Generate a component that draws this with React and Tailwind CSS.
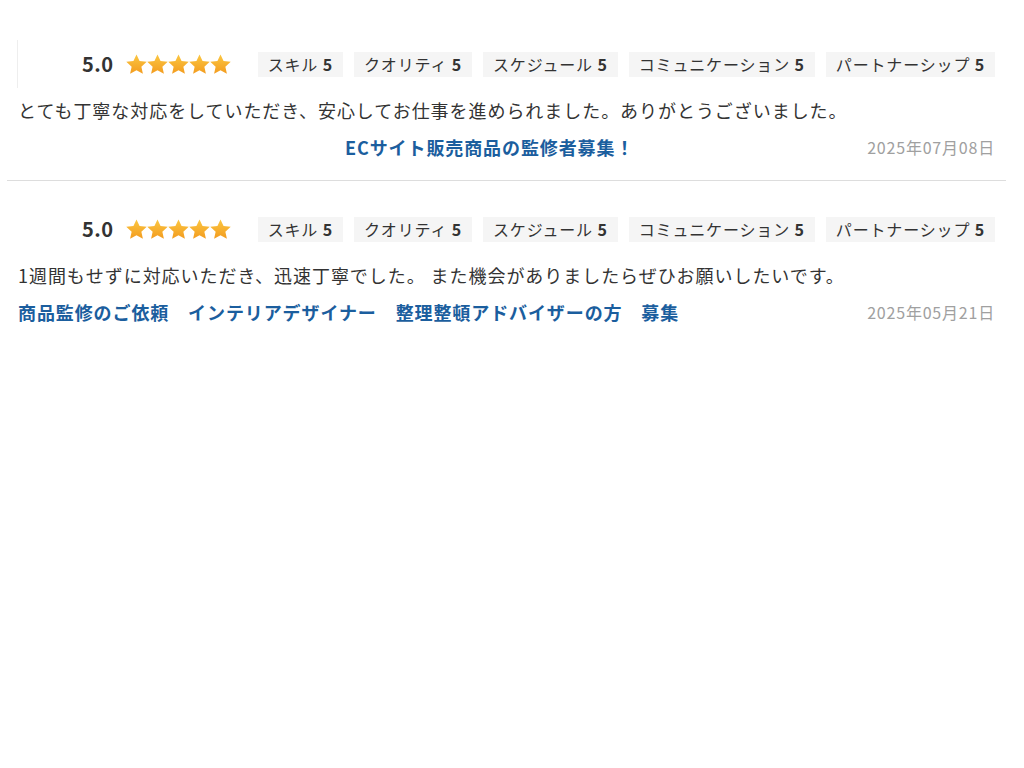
const reviews = [
    {
        score: '5.0',
        comment: 'とても丁寧な対応をしていただき、安心してお仕事を進められました。ありがとうございました。',
        title: 'ECサイト販売商品の監修者募集！',
        date: '2025年07月08日',
        leftRule: true,
        titleOffset: true,
    },
    {
        score: '5.0',
        comment: '1週間もせずに対応いただき、迅速丁寧でした。 また機会がありましたらぜひお願いしたいです。',
        title: '商品監修のご依頼　インテリアデザイナー　整理整頓アドバイザーの方　募集',
        date: '2025年05月21日',
        leftRule: false,
        titleOffset: false,
    },
];

const tags = [
    ['スキル', 5],
    ['クオリティ', 5],
    ['スケジュール', 5],
    ['コミュニケーション', 5],
    ['パートナーシップ', 5],
];

function Star() {
    return (
        <svg width="21" height="21" viewBox="1 1 22 22">
            <defs>
                <linearGradient id="starGrad" x1="0" y1="0" x2="0" y2="1">
                    <stop offset="0" stopColor="#fbc742" />
                    <stop offset="1" stopColor="#f39c1f" />
                </linearGradient>
            </defs>
            <path
                d="M12 1.5l3.2 6.9 7.5.8-5.6 5.1 1.6 7.4L12 17.9l-6.7 3.8 1.6-7.4-5.6-5.1 7.5-.8z"
                fill="url(#starGrad)"
            />
        </svg>
    );
}

function Review({ r }) {
    return (
        <div className="px-[11px] pt-[24px] pb-[21px]">
            {/* rating row */}
            <div
                className={
                    'flex items-center h-[48px] pl-[64px] ' +
                    (r.leftRule ? 'border-l border-[#eeeeee] -ml-px' : '')
                }
            >
                <span className="text-[20px] font-bold text-[#333333] tracking-[0.5px]">{r.score}</span>
                <div className="flex ml-[12px]">
                    {[0, 1, 2, 3, 4].map((i) => (
                        <Star key={i} />
                    ))}
                </div>
                <div className="flex ml-auto gap-[11px]">
                    {tags.map(([label, n]) => (
                        <span
                            key={label}
                            className="bg-[#f5f5f5] h-[25px] px-[10px] flex items-center text-[16px] tracking-[0.85px] text-[#333333]"
                        >
                            {label}&nbsp;<b>{n}</b>
                        </span>
                    ))}
                </div>
            </div>

            <p className="mt-[10px] text-[18px] tracking-[0.95px] leading-[24px] text-[#333333]">{r.comment}</p>

            <div className="mt-[13px] flex items-center leading-[24px]">
                <a
                    href="#"
                    className={
                        'text-[18px] tracking-[0.9px] font-bold text-[#1b5e9e] ' +
                        (r.titleOffset ? 'ml-[327px]' : '')
                    }
                >
                    {r.title}
                </a>
                <span className="ml-auto text-[16px] tracking-[0.8px] text-[#a0a0a0]">{r.date}</span>
            </div>
        </div>
    );
}

export default function App() {
    return (
        <div
            className="min-h-screen bg-white pt-[16px] pl-[7px] pr-[18px]"
            style={{ fontFamily: '"Noto Sans CJK JP", "Noto Sans", sans-serif' }}
        >
            {reviews.map((r, idx) => (
                <div key={idx} className={idx < reviews.length - 1 ? 'border-b border-[#dddddd]' : ''}>
                    <Review r={r} />
                </div>
            ))}
        </div>
    );
}
